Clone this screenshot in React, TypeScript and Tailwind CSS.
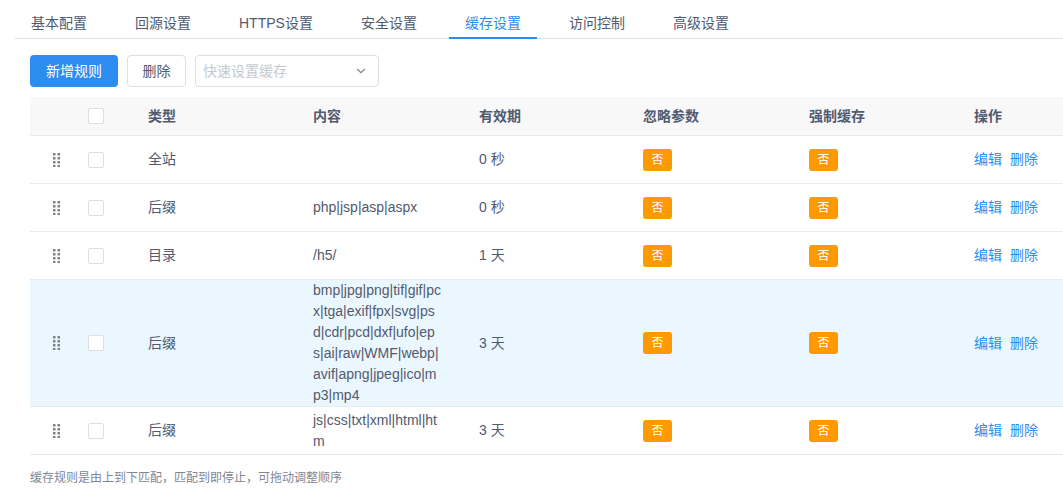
import React from 'react';
import { ChevronDown } from 'lucide-react';

const TABS = ['基本配置', '回源设置', 'HTTPS设置', '安全设置', '缓存设置', '访问控制', '高级设置'];

const ROWS = [
  { type: '全站', content: '', ttl: '0 秒' },
  { type: '后缀', content: 'php|jsp|asp|aspx', ttl: '0 秒' },
  { type: '目录', content: '/h5/', ttl: '1 天' },
  {
    type: '后缀',
    content: 'bmp|jpg|png|tif|gif|pcx|tga|exif|fpx|svg|psd|cdr|pcd|dxf|ufo|eps|ai|raw|WMF|webp|avif|apng|jpeg|ico|mp3|mp4',
    ttl: '3 天',
    active: true,
  },
  { type: '后缀', content: 'js|css|txt|xml|html|htm', ttl: '3 天' },
];

function Handle() {
  return (
    <svg width="7" height="14" viewBox="0 0 7 14" className="block">
      {[0, 4, 8, 12].map(y => (
        <React.Fragment key={y}>
          <rect x="0" y={y} width="2.5" height="2.5" fill="#808080" />
          <rect x="4.5" y={y} width="2.5" height="2.5" fill="#808080" />
        </React.Fragment>
      ))}
    </svg>
  );
}

function Checkbox() {
  return <span className="block w-4 h-4 rounded-[2px] border border-[#dcdee2] bg-white" />;
}

function Tag() {
  return (
    <span className="inline-block w-[29px] h-[22px] rounded-[3px] bg-[#ff9900] text-white text-[12px] leading-[22px] text-center">
      否
    </span>
  );
}

export default function App() {
  return (
    <div
      className="w-[1063px] min-h-[501px] bg-white text-[#515a6e] text-[14px] overflow-hidden"
      style={{ fontFamily: '"Liberation Sans", "Noto Sans CJK SC", sans-serif' }}
    >
      {/* tabs */}
      <div className="ml-[15px] flex gap-4 border-b border-[#dcdee2]">
        {TABS.map((t, i) => (
          <div
            key={t}
            className={
              'h-[39px] px-4 pt-[13px] leading-5 -mb-px border-b-2 whitespace-nowrap ' +
              (i === 4 ? 'border-[#2d8cf0] text-[#2d8cf0]' : 'border-transparent')
            }
          >
            {t}
          </div>
        ))}
      </div>

      {/* toolbar */}
      <div className="ml-[30px] mt-[16px] flex gap-[9px]">
        <button className="w-[88px] h-8 rounded-[4px] bg-[#2d8cf0] text-white text-[14px]">新增规则</button>
        <button className="w-[59px] h-8 rounded-[4px] border border-[#dcdee2] bg-white text-[#515a6e] text-[14px]">删除</button>
        <div className="w-[184px] h-8 rounded-[4px] border border-[#dcdee2] bg-white flex items-center justify-between pl-[7px] pr-[10px]">
          <span className="text-[#c5c8ce]">快速设置缓存</span>
          <ChevronDown size={14} color="#808695" />
        </div>
      </div>

      {/* table */}
      <div className="ml-[30px] mt-[10px]">
        <div className="flex h-[39px] items-center bg-[#f8f8f9] border-b border-[#e8eaec] font-bold">
          <div className="w-[40px]" />
          <div className="w-[60px] pl-[18px]">
            <Checkbox />
          </div>
          <div className="w-[165px] pl-[18px]">类型</div>
          <div className="w-[166px] pl-[18px]">内容</div>
          <div className="w-[164px] pl-[18px]">有效期</div>
          <div className="w-[166px] pl-[18px]">忽略参数</div>
          <div className="w-[165px] pl-[18px]">强制缓存</div>
          <div className="flex-1 pl-[18px]">操作</div>
        </div>

        {ROWS.map((r, i) => (
          <div
            key={i}
            className={
              'flex min-h-[48px] items-center border-b border-[#e8eaec] ' + (r.active ? 'bg-[#ebf7ff]' : 'bg-white')
            }
          >
            <div className="w-[40px] pl-[23px]">
              <Handle />
            </div>
            <div className="w-[60px] pl-[18px]">
              <Checkbox />
            </div>
            <div className="w-[165px] pl-[18px]">{r.type}</div>
            <div className="w-[166px] pl-[18px] pr-[20px] leading-[21px] break-all">{r.content}</div>
            <div className="w-[164px] pl-[18px]">{r.ttl}</div>
            <div className="w-[166px] pl-[18px]">
              <Tag />
            </div>
            <div className="w-[165px] pl-[18px]">
              <Tag />
            </div>
            <div className="flex-1 pl-[18px] flex gap-2 text-[#2d8cf0]">
              <span>编辑</span>
              <span>删除</span>
            </div>
          </div>
        ))}

        <p className="mt-[14px] text-[12px] leading-[18px] text-[#808695]">缓存规则是由上到下匹配，匹配到即停止，可拖动调整顺序</p>
      </div>
    </div>
  );
}
